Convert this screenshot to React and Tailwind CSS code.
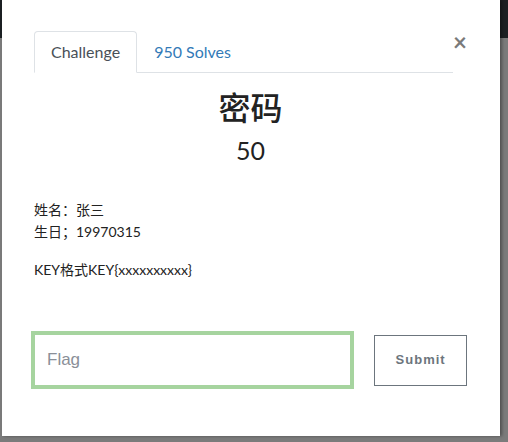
import React from "react";

const App = () => {
  return (
    <div className="relative w-[508px] h-[442px] overflow-hidden bg-[#7b7b7b] font-['Lato','Noto_Sans_CJK_SC',sans-serif]">
      {/* page navbar behind the backdrop */}
      <div className="h-[38px] bg-[#1c2023]" />

      {/* Modal */}
      <div className="absolute left-[2px] top-0 w-[498px] h-[436px] bg-white shadow-[2px_0_3px_rgba(0,0,0,0.35)] pl-[32px] pr-[33px] pt-[31px]">
        {/* Tabs + close */}
        <div className="flex items-start">
          <div className="flex w-[420px] border-b border-[#dee2e6]">
            <div className="border border-[#dee2e6] border-b-white rounded-t-[4px] -mb-px px-4 h-[42px] flex items-center text-[16px] text-[#495057]">
              Challenge
            </div>
            <div className="px-[17px] h-[41px] flex items-center text-[16px] text-[#337ab7]">
              950 Solves
            </div>
          </div>
          <button className="ml-auto -mt-[1px] text-[24px] leading-[24px] font-bold text-[#7a7a7a]">
            ×
          </button>
        </div>

        {/* Title */}
        <div className="text-center text-[#222]">
          <h3 className="mt-[15px] text-[32px] leading-[40px] font-medium">密码</h3>
          <h4 className="mt-[7px] text-[25px] leading-[30px]">50</h4>
        </div>

        {/* Description */}
        <div className="mt-[34px] text-[14px] leading-[22px] text-[#222]">
          <p>
            姓名：张三
            <br />
            生日；19970315
          </p>
          <p className="mt-[16px]">KEY格式KEY{"{xxxxxxxxxx}"}</p>
        </div>

        {/* Flag form */}
        <div className="mt-[50px] flex items-center">
          <input
            autoFocus
            type="text"
            placeholder="Flag"
            className="-ml-[3px] w-[324px] h-[58px] border-4 border-[#a6d49f] px-3 text-[17px] font-['Liberation_Sans',sans-serif] text-[#333] placeholder-[#8a8f98] outline-none caret-[#333]"
          />
          <button className="ml-[20px] w-[93px] h-[51px] border border-[#6c757d] text-[13px] font-bold tracking-[1px] text-[#6c757d] font-['Liberation_Sans',sans-serif]">
            Submit
          </button>
        </div>
      </div>
    </div>
  );
};

export default App;
